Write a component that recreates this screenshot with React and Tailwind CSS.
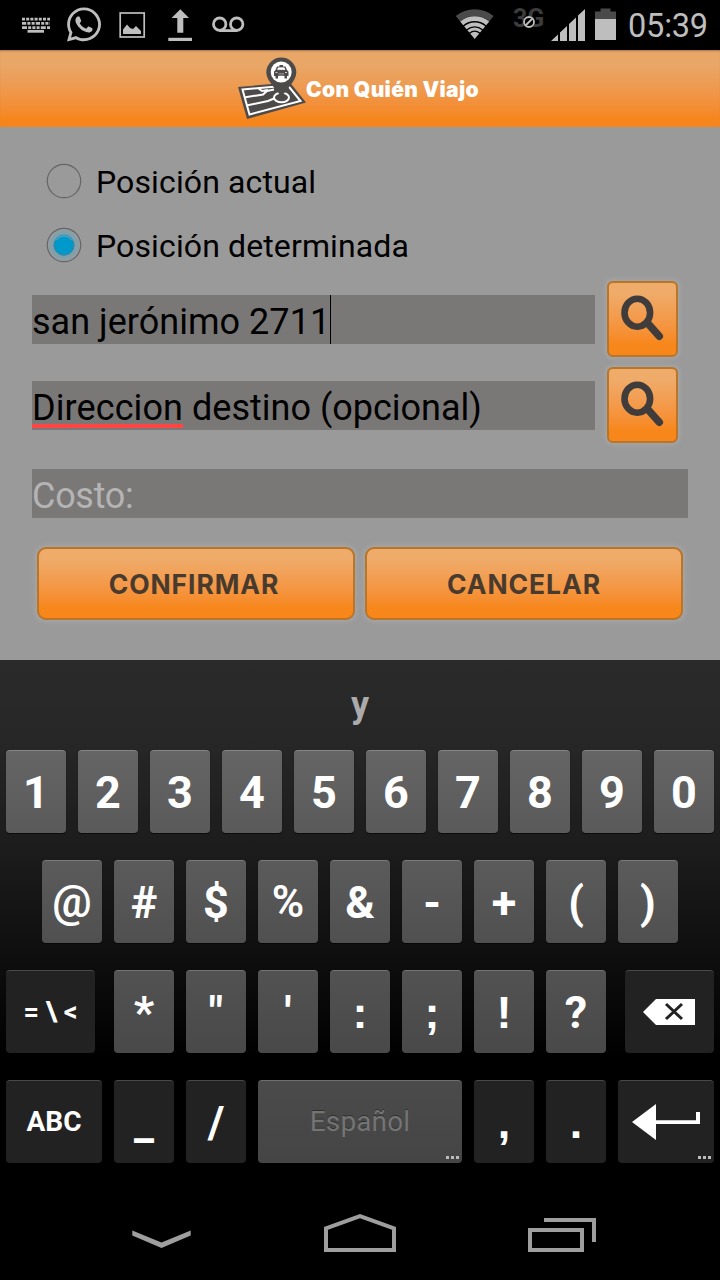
import React from "react";
import { FaWhatsapp } from "react-icons/fa";

function wedge(r1, r2) {
  const a = (39.6 * Math.PI) / 180;
  const s = Math.sin(a);
  const c = Math.cos(a);
  const cx = 474.7;
  const cy = 39;
  return `M${cx - r2 * s} ${cy - r2 * c}A${r2} ${r2} 0 0 1 ${cx + r2 * s} ${cy - r2 * c}L${cx + r1 * s} ${cy - r1 * c}A${r1 || 0.01} ${r1 || 0.01} 0 0 0 ${cx - r1 * s} ${cy - r1 * c}Z`;
}

function StatusBar() {
  return (
    <div className="flex h-[50px] shrink-0 items-start bg-black text-[#bebebe]">
      <svg className="ml-5 h-[50px] w-8" viewBox="20 0 32 50" fill="none" stroke="currentColor">
        <path d="M22 19.2H50" strokeWidth="2.8" strokeDasharray="3 1.2" />
        <path d="M22 23.4H50" strokeWidth="2.6" strokeDasharray="4.2 1.2 3 1.2 3 1.2" />
        <path d="M22 27.6H50" strokeWidth="2.6" strokeDasharray="5 1.2 3 1.2 3 1.2 3 1.2" />
        <path d="M27.5 31.3H44" strokeWidth="2.8" />
      </svg>
      <FaWhatsapp className="mt-[5px] ml-[15px] h-[39px] w-[34px]" />
      <svg className="ml-4 h-[50px] w-[30px]" viewBox="117 0 30 50">
        <rect x="120.2" y="13" width="24" height="24" fill="none" stroke="currentColor" strokeWidth="1.7" />
        <path d="M123 34V29.5L127 24.5L130 28L133 29L136 26L141 31V34Z" fill="currentColor" />
      </svg>
      <svg className="ml-[19px] h-[50px] w-7" viewBox="166 0 28 50" fill="currentColor">
        <path d="M180.3 9.3L189 18H183.3V32.7H177.3V18H171.5Z" />
        <path d="M168.3 37.8H192V41H168.3Z" />
      </svg>
      <svg className="ml-4 h-[50px] w-9" viewBox="210 0 36 50" fill="none" stroke="currentColor" strokeWidth="2.8">
        <circle cx="219.7" cy="24.2" r="6.2" />
        <circle cx="236.7" cy="24.2" r="6.2" />
        <path d="M219 30.6H237.5" />
      </svg>
      <div className="flex-1" />
      <svg className="h-[50px] w-[42px]" viewBox="454 0 42 50" fill="currentColor">
        <path d={wedge(22.9, 29.8)} fill="#4a4a4a" />
        <path d={wedge(18, 22.8)} />
        <path d={wedge(12.8, 16.5)} />
        <path d={wedge(8.4, 11.4)} />
        <path d={wedge(0, 7.1)} />
      </svg>
      <div className="relative ml-[17px] h-[50px] w-[34px] font-bold">
        <span className="block pt-[5px] text-[25px] leading-[27px] text-[#3c3c3c]">3G</span>
        <svg className="absolute top-0 left-0 h-[50px] w-[34px]" viewBox="513 0 34 50" fill="none">
          <circle cx="529" cy="22" r="6" fill="#000" />
          <circle cx="529" cy="22" r="5" stroke="currentColor" strokeWidth="1.8" />
          <path d="M525.5 25.5L532.5 18.5" stroke="currentColor" strokeWidth="1.8" />
        </svg>
      </div>
      <svg className="ml-[3px] h-[50px] w-9" viewBox="550 0 36 50" fill="currentColor">
        <path d="M551 41L558 34.4V41ZM560 41V32.5L567 26V41ZM569 41V24L576 17.4V41ZM578 41V15.5L585 9V41Z" />
      </svg>
      <svg className="ml-2 h-[50px] w-6" viewBox="594 0 24 50">
        <path d="M595 19V11.5H600.5V8.5H610.5V11.5H616V19Z" fill="#4a4a4a" />
        <path d="M595 19H616V40H595Z" fill="currentColor" />
      </svg>
      <span className="mr-3 ml-[10px] w-20 pt-[7px] text-[32.5px] leading-[38px] tracking-[-0.2px] whitespace-nowrap">05:39</span>
    </div>
  );
}

function Logo() {
  return (
    <svg className="h-[77px] w-[68px]" viewBox="238 50 68 77">
      <path d="M238 87L290 82.5L306 102.5L247 119Z" fill="#4d4a4a" />
      <path d="M242.5 89.5L288 85.5L300.5 101L249.5 114.5Z" fill="none" stroke="#fff" strokeWidth="2" />
      <path d="M244 97.5L263 94.5L267 91L274 89.5M246.5 105.5L268 101L274 98.5M258 88L262 91L268 90" fill="none" stroke="#fff" strokeWidth="2" />
      <ellipse cx="281.5" cy="97.5" rx="7.5" ry="4.7" fill="none" stroke="#fff" strokeWidth="2" />
      <path d="M281.5 97.5C279 91 266.3 82 266.3 72.5A15 15 0 0 1 296.3 72.5C296.3 82 284 91 281.5 97.5Z" fill="#4d4a4a" />
      <circle cx="281.2" cy="72" r="10.5" fill="#fff" />
      <path d="M275.5 70L277 66.5H279.5V65H283V66.5H285.5L287 70L288.5 71.5V76H287V78.5H284.5V76H278V78.5H275.5V76H274V71.5Z" fill="#4d4a4a" />
      <path d="M277.5 69.5L278.3 67.8H284.2L285 69.5ZM275.5 72.5H277.5M285 72.5H287" fill="#fff" stroke="#fff" strokeWidth="0.7" />
      <path d="M278.5 73.7H284M278.5 75.2H284" stroke="#aaa" strokeWidth="0.7" />
    </svg>
  );
}

function Header() {
  return (
    <header className="flex h-[77px] shrink-0 items-center bg-linear-to-b from-[#e8a667] from-20% to-[#f6861b] to-90% pl-[238px] shadow-[inset_0_2px_2px_-1px_#a8754a]">
      <Logo />
      <span className="w-[180px] pt-[3px] font-['Inter',sans-serif] text-[21px] leading-7 font-black tracking-[0.3px] whitespace-nowrap text-white">
        Con Quién Viajo
      </span>
    </header>
  );
}

function Radio({ label, checked }) {
  return (
    <label className="flex h-16 items-center">
      <svg className="h-9 w-9" viewBox="0 0 36 36">
        <defs>
          <radialGradient id="glow">
            <stop offset="55%" stopColor="#6fa3b5" />
            <stop offset="100%" stopColor="#999c9d" />
          </radialGradient>
        </defs>
        <circle cx="18" cy="18" r="16.7" fill={checked ? "url(#glow)" : "none"} stroke="#666" strokeWidth="1.2" />
        {checked && <circle cx="18" cy="18.2" r="10" fill="#0099cc" stroke="#437f95" strokeWidth="1" />}
        {checked && <path d="M10.5 13A9 9 0 0 1 25.5 13" fill="none" stroke="#4fb8dc" strokeWidth="1" />}
      </svg>
      <span className="ml-[14px] pt-px text-[32px] leading-10 tracking-[0.12px] whitespace-nowrap">{label}</span>
    </label>
  );
}

const orange =
  "bg-linear-to-b from-[#efab69] from-15% to-[#f7871a] to-85% border-2 border-[#b97528] shadow-[0_0_4px_2px_#a6a6a6]";

function SearchButton() {
  return (
    <button className={`ml-[12px] h-[76px] w-[71px] rounded-[6px] ${orange}`}>
      <svg className="h-[72px] w-[67px]" viewBox="609 283 67 72" fill="none" stroke="#3f3c3b">
        <path d="M647.5 323L659.3 336.3" strokeWidth="7.5" strokeLinecap="round" />
        <ellipse cx="637.3" cy="312.7" rx="12.8" ry="14" strokeWidth="6.6" />
      </svg>
    </button>
  );
}

function FormButton({ pad, children }) {
  return (
    <button className={`flex h-[73px] w-[318px] items-center justify-center rounded-[9px] pt-[2px] font-['Inter',sans-serif] text-[26.5px] font-bold tracking-[0.9px] text-[#493a2e] ${pad} ${orange}`}>
      {children}
    </button>
  );
}

function Form() {
  const field = "h-[49px] bg-[#7a7777] text-[36px] leading-[55px] whitespace-nowrap";
  return (
    <main className="flex h-[533px] shrink-0 flex-col bg-[#9a9a9a] pt-[22px] text-black">
      <div className="flex flex-col pl-[46px]">
        <Radio label="Posición actual" />
        <Radio label="Posición determinada" checked />
      </div>
      <div className="mt-[4px] flex h-[76px] items-center pl-8">
        <div className={`flex w-[563px] ${field}`}>
          <span className="w-[298px] tracking-[0.03px]">san jerónimo 2711</span>
          <span className="h-[49px] w-px bg-black" />
        </div>
        <SearchButton />
      </div>
      <div className="mt-[10px] flex h-[76px] items-center pl-8">
        <div className={`w-[563px] ${field}`}>
          <span className="relative inline-block h-[49px] tracking-[0.1px]">
            Direccion
            <span className="absolute right-0 bottom-[2px] left-0 h-1 bg-[#ff4444]" />
          </span>{" "}
          destino (opcional)
        </div>
        <SearchButton />
      </div>
      <div className={`mx-8 mt-[26px] tracking-[-0.3px] text-[#b4b4b4] ${field}`}>Costo:</div>
      <div className="mt-[29px] flex gap-[10px] pl-[37px]">
        <FormButton pad="pr-1">CONFIRMAR</FormButton>
        <FormButton pad="pr-0">CANCELAR</FormButton>
      </div>
    </main>
  );
}

const light = [
  "bg-linear-to-b from-[#656565] to-[#5a5a5a] border-[#868686]",
  "bg-linear-to-b from-[#5b5b5b] to-[#505050] border-[#7b7b7b]",
  "bg-linear-to-b from-[#525252] to-[#494949] border-[#747474]",
  "bg-linear-to-b from-[#4b4b4b] to-[#454545] border-[#707070]",
];
const dark = "bg-[#222] border-[#484848]";
const glyph = "text-[45px] font-bold";
const squareDot = "font-['Liberation_Sans',sans-serif] text-[45px] font-bold";

function Key({ tone, width = "w-[60px]", text = glyph, children }) {
  return (
    <button className={`relative flex h-[83px] shrink-0 items-center justify-center rounded-[4px] border-t leading-none whitespace-pre text-white shadow-[0_1px_1px_#0009] ${width} ${text} ${tone}`}>
      {children}
    </button>
  );
}

function Dots() {
  return (
    <span className="absolute right-[3px] bottom-[4px] flex gap-[2px]">
      <i className="h-[3px] w-[3px] bg-[#bbb]" />
      <i className="h-[3px] w-[3px] bg-[#bbb]" />
      <i className="h-[3px] w-[3px] bg-[#bbb]" />
    </span>
  );
}

function Keyboard() {
  return (
    <section className="flex h-[520px] shrink-0 flex-col bg-[linear-gradient(180deg,#2a2a2a_0,#272727_80px,#1c1c1c_190px,#0e0e0e_300px,#000_400px)]">
      <div className="flex h-[90px] items-center justify-center text-[36px] font-bold text-[#ababab]">y</div>
      <div className="flex flex-col gap-[27px]">
        <div className="flex justify-center gap-3">
          {[..."1234567890"].map((k) => (
            <Key key={k} tone={light[0]}>{k}</Key>
          ))}
        </div>
        <div className="flex justify-center gap-3">
          {[..."@#$%&-+()"].map((k) => (
            <Key key={k} tone={light[1]} text={k === "@" || k === "%" ? "text-[44px] font-semibold" : glyph}>{k}</Key>
          ))}
        </div>
        <div className="flex justify-between px-[6px]">
          <Key tone={dark} width="w-[89px]" text="text-[27px] font-bold">{"= \\ <"}</Key>
          <div className="flex gap-3">
            {[..."*\"':;!?"].map((k) => (
              <Key key={k} tone={light[2]} text={":;!".includes(k) ? squareDot : glyph}>{k}</Key>
            ))}
          </div>
          <Key tone={dark} width="w-[89px]">
            <svg className="mr-px h-7 w-[54px]" viewBox="0 0 54 28">
              <path d="M1 14L14 1H53V27H14Z" fill="#fff" />
              <path d="M24 6L40 21M40 6L24 21" stroke="#222" strokeWidth="3" />
            </svg>
          </Key>
        </div>
        <div className="flex gap-3 px-[6px]">
          <Key tone={dark} width="w-24" text="text-[28px] font-bold">ABC</Key>
          <Key tone={dark}>_</Key>
          <Key tone={dark}>/</Key>
          <Key tone={light[3]} width="w-[204px]" text="text-[28px] font-normal">
            <span className="tracking-[0.1px] text-[#747474] [text-shadow:0_-1px_0_#303030]">Español</span>
            <Dots />
          </Key>
          <Key tone={dark} text={squareDot}>,</Key>
          <Key tone={dark} text={squareDot}>.</Key>
          <Key tone={dark} width="w-24">
            <svg className="mb-px h-9 w-[70px]" viewBox="0 0 70 36">
              <path d="M1 18L25 0V16.2H65V8H69V20H25V36Z" fill="#fff" />
            </svg>
            <Dots />
          </Key>
        </div>
      </div>
    </section>
  );
}

function NavBar() {
  return (
    <nav className="flex h-[100px] shrink-0 items-center bg-black pl-[130px] text-[#9e9e9e]">
      <svg className="h-[100px] w-[63px]" viewBox="130 1180 63 100" fill="currentColor">
        <path d="M132.3 1230.5L161.5 1242.5L190.7 1230.5V1235.5L161.5 1248L132.3 1235.5Z" />
      </svg>
      <svg className="ml-[129px] h-[100px] w-[76px]" viewBox="322 1180 76 100" fill="none" stroke="currentColor" strokeWidth="4">
        <path d="M326 1228.4L360 1216.2L394 1228.4V1250H326Z" />
      </svg>
      <svg className="ml-[128px] h-[100px] w-[72px]" viewBox="526 1180 72 100" fill="none" stroke="currentColor" strokeWidth="4">
        <path d="M530 1230H582V1250H530ZM544 1220H594V1242" />
      </svg>
    </nav>
  );
}

export default function App() {
  return (
    <div className="flex h-[1280px] w-[720px] flex-col overflow-hidden bg-black font-['Roboto',sans-serif]">
      <StatusBar />
      <Header />
      <Form />
      <Keyboard />
      <NavBar />
    </div>
  );
}
